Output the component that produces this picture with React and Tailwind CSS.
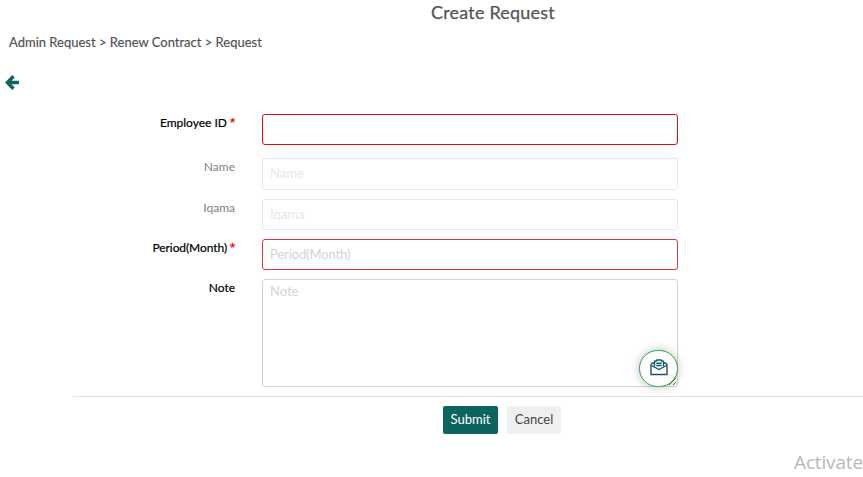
import React from "react";

const inputBase =
  "block w-[416px] rounded-[3px] border bg-white px-[7px] text-[13px] leading-[15px] outline-none";

function Label({ children, required, muted, className = "" }) {
  return (
    <label
      className={`w-[235px] shrink-0 whitespace-nowrap text-right text-[12px] leading-[16px] ${
        muted ? "text-[#808080]" : "text-black [-webkit-text-stroke:0.2px_black]"
      } ${className}`}
    >
      {children}
      {required && (
        <span className="ml-[3px] inline-block h-[14px] align-top font-['Liberation_Sans',sans-serif] text-[13px] text-[#f00000] [-webkit-text-stroke:0.25px_#f00000]">*</span>
      )}
    </label>
  );
}

function MailIcon() {
  return (
    <svg width="18" height="17" viewBox="0 0 18 17" fill="none" stroke="#0b5d68" strokeWidth="1.4">
      <path d="M4 4H2.5L1 5.5V15.5H17V5.5L15.5 4H14" stroke="#1c5562" />
      <path d="M1.5 6.5L9 10.5L16.5 6.5" />
      <path d="M4.5 7.6V2.2H6L6.8 1H11.2L12 2.2H13.5V7.6" />
      <path d="M6.3 4.2H11.7M6.3 6.5H11.7" />
    </svg>
  );
}

export default function App() {
  return (
    <div className="flex h-[477px] w-[863px] flex-col overflow-hidden bg-white font-['Lato',sans-serif]">
      <h1 className="h-[33px] shrink-0 pl-[431px] text-[18px] leading-[24px] tracking-[0.2px] text-[#555] [-webkit-text-stroke:0.25px_#555]">
        Create Request
      </h1>
      <nav className="h-[41px] shrink-0 pl-[9px] text-[13px] leading-[18px] text-[#505050] [-webkit-text-stroke:0.15px_#505050]">
        Admin Request &gt; Renew Contract &gt; Request
      </nav>
      <div className="h-[40px] shrink-0 pl-[5px]">
        <svg width="15" height="16" viewBox="0 0 15 16" fill="none" stroke="#0c6460" strokeWidth="3.4">
          <path d="M8.5 2.2L2.4 8.5L8.5 14.8M2.4 8.5H14" />
        </svg>
      </div>
      <form className="flex shrink-0 flex-col">
        <div className="flex h-[44px] gap-[27px]">
          <Label required className="pt-[1px]">Employee ID</Label>
          <input className={`${inputBase} h-[31px] border-[#e80d0d]`} />
        </div>
        <div className="flex h-[41px] gap-[27px]">
          <Label muted className="pt-[1px]">Name</Label>
          <input disabled placeholder="Name" className={`${inputBase} h-[32px] border-[#e4e7ea] pb-[2px] placeholder:text-[#e6e9ec]`} />
        </div>
        <div className="flex h-[40px] gap-[27px]">
          <Label muted className="pt-[1px]">Iqama</Label>
          <input disabled placeholder="Iqama" className={`${inputBase} h-[31px] border-[#e4e7ea] pb-[2px] placeholder:text-[#e6e9ec]`} />
        </div>
        <div className="flex h-[40px] gap-[27px]">
          <Label required className="pt-[1px] tracking-[-0.08px]">Period(Month)</Label>
          <input placeholder="Period(Month)" className={`${inputBase} h-[31px] border-[#d9364a] pb-[2px] tracking-[-0.12px] placeholder:text-[#ced4da]`} />
        </div>
        <div className="flex h-[117px] gap-[27px]">
          <Label className="pt-[1px]">Note</Label>
          <div className="relative">
            <textarea placeholder="Note" className={`${inputBase} h-[108px] resize-y border-[#ced4da] pt-[4px] placeholder:text-[#ced4da]`} />
            <button type="button" className="absolute left-[377px] top-[71px] flex h-[37px] w-[39px] items-center justify-center rounded-full border border-[#28a745] bg-white pb-[2px] shadow-[0_0_10px_rgba(0,0,0,0.25)]">
              <MailIcon />
            </button>
          </div>
        </div>
        <div className="ml-[73px] flex gap-[9px] border-t border-[#e3e4e6] pl-[370px] pt-[9px] text-[13px] leading-[18px]">
          <button type="button" className="h-[28px] w-[55px] rounded-[2px] bg-[#0c6460] pb-[2px] text-white">Submit</button>
          <button type="button" className="h-[28px] w-[54px] rounded-[2px] bg-[#efeff0] pb-[2px] text-[#444]">Cancel</button>
        </div>
      </form>
      <div className="mt-[14px] shrink-0 self-end whitespace-nowrap font-['Open_Sans',sans-serif] text-[19px] leading-[28px] tracking-[-0.15px] text-[#b8b8b8]">
        Activate
      </div>
    </div>
  );
}
